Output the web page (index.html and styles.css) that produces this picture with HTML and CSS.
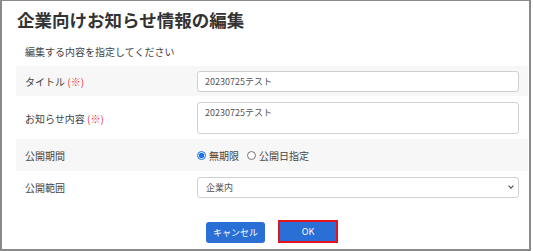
FILE: index.html
```html
<!DOCTYPE html>
<html lang="ja">
<head>
    <meta charset="UTF-8">
    <meta name="viewport" content="width=device-width, initial-scale=1.0">
    <title>企業向けお知らせ情報の編集</title>
    <link rel="stylesheet" href="styles.css">
</head>
<body>
    <div class="frame">
        <h1 class="title">企業向けお知らせ情報の編集</h1>
        <p class="lead">編集する内容を指定してください</p>

        <div class="row shaded">
            <div class="label">タイトル <span class="req">(※)</span></div>
            <div class="field">
                <input type="text" class="input" value="20230725テスト">
            </div>
        </div>
        <div class="row">
            <div class="label">お知らせ内容 <span class="req">(※)</span></div>
            <div class="field">
                <textarea class="input area">20230725テスト</textarea>
            </div>
        </div>
        <div class="row shaded period">
            <div class="label">公開期間</div>
            <div class="field radios">
                <label class="radio"><input type="radio" name="period" checked> 無期限</label>
                <label class="radio"><input type="radio" name="period"> 公開日指定</label>
            </div>
        </div>
        <div class="row">
            <div class="label">公開範囲</div>
            <div class="field select-wrap">
                <select class="input select">
                    <option>企業内</option>
                </select>
            </div>
        </div>

        <div class="actions">
            <button class="btn">キャンセル</button>
            <button class="btn ok">OK</button>
        </div>
    </div>
</body>
</html>
```

FILE: styles.css
```css
body {
    margin: 0;
    font-family: "Noto Sans CJK JP", "Noto Sans", sans-serif;
    color: #444;
    background: white;
}
.frame {
    width: 527px;
    height: 248px;
    border: 2px solid #8a8a8a;
    border-top-width: 1px;
    box-sizing: content-box;
}
.title {
    margin: 0;
    padding: 7px 0 0 15px;
    font-size: 17.5px;
    line-height: 24px;
    font-weight: bold;
    color: #333;
}
.lead {
    margin: 13px 0 7px 23px;
    font-size: 10px;
    line-height: 14px;
}
.row {
    display: grid;
    grid-template-columns: 181px 1fr;
    align-items: center;
    margin: 0 1px 0 14px;
    padding: 5px 9px 4px 0;
}
.shaded {
    background: #f7f7f7;
}
.row + .row {
    padding-top: 6px;
    padding-bottom: 5px;
}
.period {
    min-height: 32px;
    box-sizing: border-box;
    padding-top: 0 !important;
    padding-bottom: 0 !important;
}
.label {
    padding-left: 9px;
    font-size: 10px;
    color: #444;
}
.req {
    color: #e8383d;
}
.input {
    display: block;
    width: 100%;
    box-sizing: border-box;
    height: 21px;
    border: 1px solid #d0d0d0;
    border-radius: 3px;
    background: white;
    padding: 0 7px;
    font-family: inherit;
    font-size: 9px;
    color: #555;
}
.area {
    height: 32px;
    padding-top: 3px;
    resize: none;
    line-height: 13px;
}
.select-wrap {
    position: relative;
}
.select {
    appearance: none;
    padding-left: 8px;
}
.select-wrap::after {
    content: "";
    position: absolute;
    right: 6px;
    top: 7px;
    width: 3px;
    height: 3px;
    border-right: 1.5px solid #444;
    border-bottom: 1.5px solid #444;
    transform: rotate(45deg);
    pointer-events: none;
}
.radios {
    display: flex;
    gap: 8px;
    font-size: 10px;
}
.radio {
    display: flex;
    align-items: center;
    gap: 3px;
}
.radio input {
    margin: 0;
    width: 9px;
    height: 9px;
    accent-color: #1a73e8;
}
.actions {
    display: flex;
    justify-content: center;
    align-items: flex-end;
    gap: 13px;
    margin: 17px 0 0 14px;
    padding-right: 1px;
}
.btn {
    width: 59px;
    height: 21px;
    border: none;
    border-radius: 3px;
    background: #2a6fd6;
    color: white;
    font-family: inherit;
    font-size: 9px;
    padding: 0;
}
.ok {
    width: 60px;
    height: 23px;
    border: 2px solid #e3141f;
    border-radius: 0;
}
```
